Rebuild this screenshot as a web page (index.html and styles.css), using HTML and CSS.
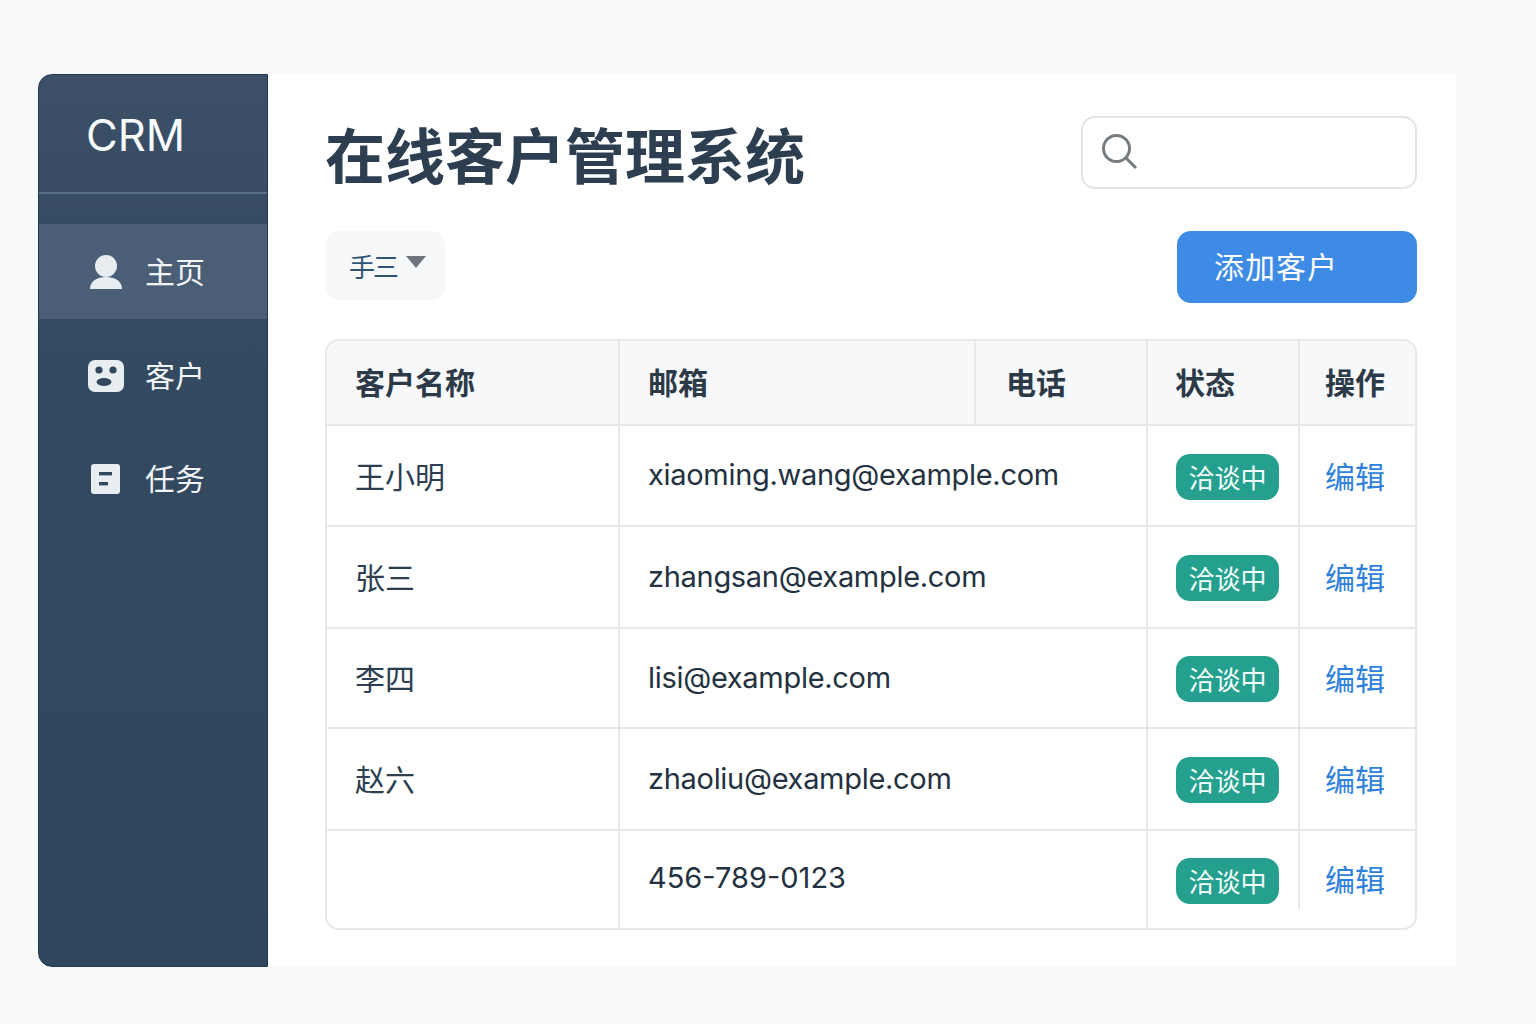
FILE: index.html
```html
<!DOCTYPE html>
<html lang="zh-CN">
<head>
<meta charset="utf-8">
<title>在线客户管理系统</title>
<link rel="stylesheet" href="styles.css">
</head>
<body>
<div class="app">
  <aside class="sidebar">
    <div class="brand">CRM</div>
    <nav class="nav">
      <a class="nav-item active">
        <svg class="nav-icon" viewBox="0 0 36 36"><circle cx="18" cy="12" r="11"/><path d="M2 35c0-8 7-12 16-12s16 4 16 12z"/></svg>
        <span class="nav-label">主页</span>
      </a>
      <a class="nav-item">
        <svg class="nav-icon" viewBox="0 0 36 36"><rect x="0" y="4" width="36" height="32" rx="7"/><circle cx="11" cy="14" r="3.6" class="cut"/><circle cx="25" cy="14" r="3.6" class="cut"/><ellipse cx="16" cy="26" rx="7.5" ry="4" class="cut"/></svg>
        <span>客户</span>
      </a>
      <a class="nav-item">
        <svg class="nav-icon" viewBox="0 0 36 36"><rect x="3" y="5" width="29" height="30" rx="3"/><rect x="11" y="13" width="13" height="3.4" class="cut"/><rect x="11" y="23" width="9" height="3.4" class="cut"/></svg>
        <span>任务</span>
      </a>
    </nav>
  </aside>
  <main class="main">
    <header class="top">
      <h1 class="title">在线客户管理系统</h1>
      <div class="search">
        <svg class="search-icon" viewBox="0 0 36 36"><circle cx="14.5" cy="14.5" r="13" /><path d="M24 24l10 10"/></svg>
      </div>
    </header>
    <div class="toolbar">
      <button class="filter"><span class="filter-text">手三</span><svg class="caret" viewBox="0 0 20 12"><path d="M0 0h20L10 12z"/></svg></button>
      <button class="add">添加客户</button>
    </div>
    <div class="table-wrap">
      <table class="table">
        <colgroup><col class="c1"><col class="c2"><col class="c3"><col class="c4"><col class="c5"></colgroup>
        <thead>
          <tr><th>客户名称</th><th>邮箱</th><th class="h-phone">电话</th><th class="h-status">状态</th><th class="h-action">操作</th></tr>
        </thead>
        <tbody>
          <tr class="r1"><td class="txt">王小明</td><td class="txt email" colspan="2">xiaoming.wang@example.com</td><td class="status"><span class="badge">洽谈中</span></td><td class="txt action"><a class="link">编辑</a></td></tr>
          <tr class="r2"><td class="txt">张三</td><td class="txt email" colspan="2">zhangsan@example.com</td><td class="status"><span class="badge">洽谈中</span></td><td class="txt action"><a class="link">编辑</a></td></tr>
          <tr class="r3"><td class="txt">李四</td><td class="txt email" colspan="2">lisi@example.com</td><td class="status"><span class="badge">洽谈中</span></td><td class="txt action"><a class="link">编辑</a></td></tr>
          <tr class="r4"><td class="txt">赵六</td><td class="txt email" colspan="2">zhaoliu@example.com</td><td class="status"><span class="badge">洽谈中</span></td><td class="txt action"><a class="link">编辑</a></td></tr>
          <tr class="r5"><td></td><td class="txt phone" colspan="2">456-789-0123</td><td class="status"><span class="badge">洽谈中</span></td><td class="txt action action-last"><a class="link">编辑</a></td></tr>
        </tbody>
      </table>
    </div>
  </main>
</div>
</body>
</html>
```
FILE: styles.css
```css
* { box-sizing: border-box; }
html, body { height: 100%; }
body {
  margin: 0;
  background: #f9f9fa;
  font-family: Inter, "Noto Sans CJK SC", sans-serif;
  color: #2c3e50;
  padding: 74px 80px 57px 38px;
}
.app { display: flex; height: 893px; }
.sidebar {
  width: 230px;
  flex: none;
  background: linear-gradient(#3c5067 0, #344a60 200px, #30465c 100%);
  border: 1px solid #1f3a57;
  border-radius: 14px 0 0 14px;
  color: #fff;
}
.brand {
  height: 119px;
  padding: 33px 0 0 47px;
  font-size: 43.5px;
  line-height: 54px;
  font-weight: 400;
  border-bottom: 2px solid #566d83;
  color: #f8fbfd;
}
.nav { margin-top: 30px; display: flex; flex-direction: column; gap: 7px; }
.nav-item {
  height: 96px;
  display: flex;
  align-items: center;
  padding-left: 49px;
  gap: 21px;
  font-size: 30px;
  color: #f1f5f8;
}
.nav-item.active { background: #4a5f75; height: 95px; }
.nav-label { padding-bottom: 4px; }
.nav-icon { width: 36px; height: 36px; fill: #e8edf2; flex: none; }
.nav-icon .cut { fill: #31475d; }
.main {
  flex: 1;
  background: #fff;
  padding: 42px 39px 37px 57px;
  display: flex;
  flex-direction: column;
}
.top { display: flex; justify-content: space-between; align-items: center; height: 72px; }
.title {
  margin: 0;
  font-size: 60px;
  line-height: 72px;
  font-weight: 700;
  color: #2c3e50;
  position: relative;
  top: 5px;
}
.search {
  width: 336px;
  height: 73px;
  border: 2px solid #e2e4e6;
  border-radius: 14px;
  background: #fff;
  display: flex;
  align-items: center;
  padding-left: 19px;
}
.search-icon { width: 36px; height: 36px; fill: none; stroke: #757b7f; stroke-width: 3; }
.toolbar { display: flex; justify-content: space-between; margin-top: 43px; height: 72px; }
.filter {
  width: 119px;
  height: 69px;
  margin-left: 1px;
  border: 0;
  border-radius: 14px;
  background: #f5f7f9;
  display: flex;
  align-items: center;
  padding: 0 0 0 23px;
  gap: 9px;
  font-family: inherit;
}
.filter-text { font-size: 26px; color: #2f5478; letter-spacing: -2px; }
.caret { width: 20px; height: 12px; fill: #6c757d; margin-bottom: 8px; }
.add {
  width: 240px;
  height: 72px;
  border: 0;
  border-radius: 14px;
  background: #3d8be4;
  color: #fff;
  font-family: inherit;
  font-size: 30px;
  letter-spacing: 1px;
  text-align: left;
  padding: 0 0 4px 37px;
}
.table-wrap {
  margin-top: 36px;
  width: 1092px;
  height: 591px;
  border: 2px solid #e6e8ea;
  border-radius: 14px;
  overflow: hidden;
}
.table {
  width: 1088px;
  height: 100%;
  table-layout: fixed;
  border-collapse: separate;
  border-spacing: 0;
}
.c1 { width: 291px; }
.c2 { width: 356px; }
.c3 { width: 172px; }
.c4 { width: 152px; }
.c5 { width: 117px; }
th, td { padding: 0 0 0 28px; border-left: 2px solid #e6e8ea; text-align: left; }
th:first-child, td:first-child { border-left: 0; }
th {
  height: 85px;
  background: #f6f8fa;
  font-size: 30px;
  font-weight: 700;
  color: #2c3a48;
  border-bottom: 2px solid #e6e8ea;
  padding-bottom: 4px;
}
.h-phone { padding-left: 30px; }
.h-status { padding-left: 27px; }
.h-action { padding-left: 25px; }
td { font-size: 30px; font-weight: 400; color: #2c3e50; border-bottom: 2px solid #e6e8ea; }
td.txt { padding-bottom: 2px; }
td.status { padding-top: 2px; }
.email { font-size: 29px; letter-spacing: -0.3px; color: #233140; }
.phone { font-size: 29px; color: #233140; }
.r1 td { height: 101px; }
.r2 td { height: 102px; }
.r3 td { height: 100px; }
.r4 td { height: 102px; }
tr:last-child td { border-bottom: 0; }
.r5 .txt { padding-bottom: 4px; }
.badge {
  display: inline-block;
  width: 103px;
  height: 46px;
  border-radius: 14px;
  background: #25a08e;
  color: #f4fffc;
  font-size: 26px;
  line-height: 50px;
  text-align: center;
  vertical-align: middle;
}
td.action { padding-left: 25px; }
.link { color: #2f7fdc; }
td.action-last {
  border-left: 0;
  padding-left: 27px;
  background: linear-gradient(#e6e8ea, #e6e8ea) left top / 2px 78px no-repeat;
}
```
